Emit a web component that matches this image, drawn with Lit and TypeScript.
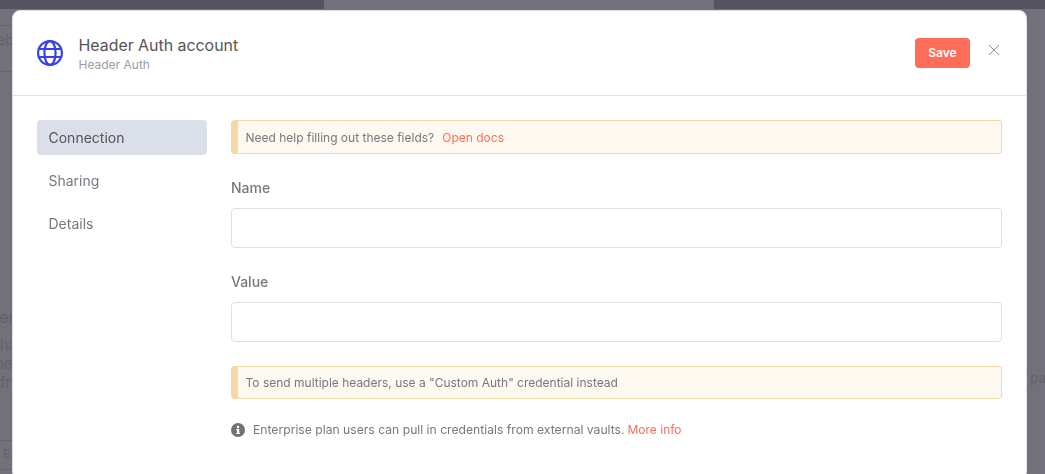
import { LitElement, html, css } from "lit";
import { customElement } from "lit/decorators.js";

@customElement("app-root")
export class AppRoot extends LitElement {
  static styles = css`
    :host { display: block; width: 1045px; height: 474px; position: relative; overflow: hidden; background: #71707b; font-family: Inter, "Liberation Sans", sans-serif; box-sizing: border-box; }
    * { box-sizing: border-box; }
    .back { position: absolute; inset: 0; color: #62616b; }
    .topband { position: absolute; left: 0; right: 0; top: 0; height: 9px; background: #54535f; }
    .topmid { position: absolute; left: 324px; top: 0; width: 390px; height: 9px; background: #71707b; }
    .hl { position: absolute; left: 0; width: 13px; height: 1px; background: #64636e; }
    .bt { position: absolute; font-size: 14px; line-height: 18px; white-space: nowrap; }
    .modal { position: absolute; left: 12px; top: 10px; width: 1015px; height: 470px; background: #fff; border: 1px solid #dbdfe7; border-radius: 8px; display: flex; flex-direction: column; filter: blur(0.3px); }
    header { height: 85px; flex: none; border-bottom: 1px solid #dbdfe7; display: flex; align-items: center; padding: 0 24px 0 24px; }
    .globe { width: 26px; height: 26px; color: #3741e8; flex: none; }
    .titles { margin-left: 15.5px; padding-top: 3px; display: flex; flex-direction: column; }
    .title { font-size: 15.9px; line-height: 20px; color: #555; }
    .sub { font-size: 12px; line-height: 16px; margin-top: 1px; color: #9c9ca4; }
    .spacer { flex: 1; }
    .save { width: 55px; height: 30px; border: 0; border-radius: 4px; background: #ff6d5a; color: #fff; font: 600 12px Inter, sans-serif; padding: 0 0 2px; margin-right: 18px; }
    .close { width: 12px; height: 12px; color: #8f8f97; margin-bottom: 6px; margin-right: 2px; flex: none; display: block; }
    .body { display: flex; padding: 24px 24px 0 24px; gap: 24px; }
    nav { width: 170px; flex: none; display: flex; flex-direction: column; gap: 8px; }
    .item { height: 35px; border-radius: 4px; padding: 0 11.5px; display: flex; align-items: center; font-size: 14px; color: #777780; }
    .item.on { background: #dbdfe9; color: #555; }
    main { flex: 1; display: flex; flex-direction: column; }
    .note { height: 34px; border: 1px solid #f4d9a6; border-left: 7px solid #f4d9a6; border-radius: 4px; background: #fdf8f0; display: flex; align-items: center; padding-left: 7.5px; font-size: 12px; color: #777780; }
    .note a { color: #ff6d5a; margin-left: 8px; }
    label { display: block; font-size: 14px; line-height: 18px; font-weight: 500; color: #777780; }
    .input { height: 40px; border: 1px solid #dbdfe7; border-radius: 4px; background: #fff; margin-top: 11px; }
    .f1 { margin-top: 25px; }
    .f2 { margin-top: 25px; }
    .n2 { margin-top: 24px; height: 33px; }
    .info { display: flex; align-items: center; margin-top: 23px; font-size: 12.16px; line-height: 16px; color: #777780; }
    .info svg { width: 14px; height: 14px; margin-right: 8px; color: #71717a; flex: none; }
    .info a { color: #ff6d5a; margin-left: 3px; font-size: 12px; }
  `;

  render() {
    return html`
      <div class="back">
        <div class="topband"></div>
        <div class="topmid"></div>
        <div class="hl" style="top:25px"></div>
        <div class="hl" style="top:71px"></div>
        <div class="hl" style="top:440px"></div>
        <div class="hl" style="top:469px"></div>
        <div class="bt" style="left:-16px;top:31px">Web</div>
        <div class="bt" style="left:-11px;top:308px;font-size:16px">Ser</div>
        <div class="bt" style="left:-8px;top:336px">cha</div>
        <div class="bt" style="left:-5px;top:355px;font-size:15px">ne</div>
        <div class="bt" style="left:0;top:374px;font-size:15px">fr</div>
        <div class="bt" style="left:3px;top:445px;font-size:12px">Ex</div>
        <div class="bt" style="left:1030px;top:369px">pa</div>
      </div>
      <div class="modal">
        <header>
          <svg class="globe" viewBox="0 0 26 26" fill="none" stroke="currentColor" stroke-width="2.2">
            <circle cx="13" cy="13" r="11.9"></circle>
            <ellipse cx="13" cy="13" rx="5.6" ry="11.9"></ellipse>
            <path d="M2 9h22M2 17h22"></path>
          </svg>
          <div class="titles">
            <div class="title">Header Auth account</div>
            <div class="sub">Header Auth</div>
          </div>
          <div class="spacer"></div>
          <button class="save">Save</button>
          <svg class="close" viewBox="0 0 12 12" fill="none" stroke="currentColor" stroke-width="1"><path d="M1 1l10 10M11 1L1 11"></path></svg>
        </header>
        <div class="body">
          <nav>
            <div class="item on">Connection</div>
            <div class="item">Sharing</div>
            <div class="item">Details</div>
          </nav>
          <main>
            <div class="note">Need help filling out these fields?<a>Open docs</a></div>
            <div class="f1"><label>Name</label><div class="input"></div></div>
            <div class="f2"><label>Value</label><div class="input"></div></div>
            <div class="note n2">To send multiple headers, use a "Custom Auth" credential instead</div>
            <div class="info">
              <svg viewBox="0 0 14 14"><circle cx="7" cy="7" r="7" fill="currentColor"></circle><rect x="6" y="6" width="2.2" height="4.6" fill="#fff"></rect><rect x="5.2" y="6" width="2" height="1" fill="#fff"></rect><rect x="5.2" y="10" width="3.8" height="1" fill="#fff"></rect><circle cx="7" cy="4" r="1.2" fill="#fff"></circle></svg>
              Enterprise plan users can pull in credentials from external vaults.<a>More info</a>
            </div>
          </main>
        </div>
      </div>
    `;
  }
}
